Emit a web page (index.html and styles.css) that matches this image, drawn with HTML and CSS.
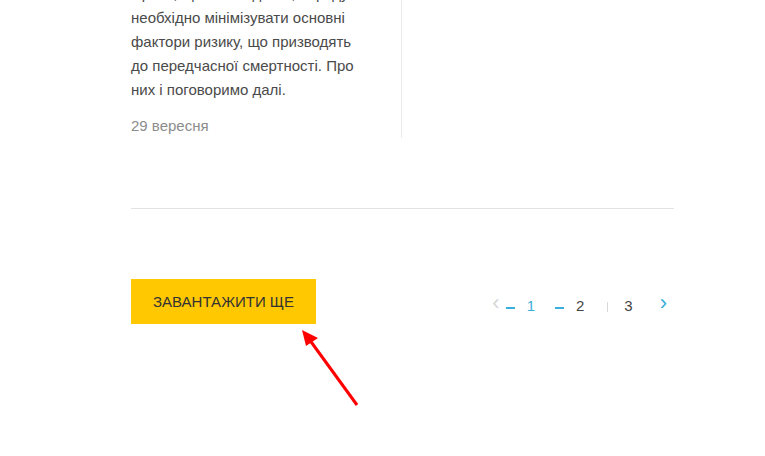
FILE: index.html
```html
<!DOCTYPE html>
<html lang="uk">
<head>
    <meta charset="UTF-8">
    <meta name="viewport" content="width=device-width, initial-scale=1.0">
    <title>Новини</title>
    <link rel="stylesheet" href="styles.css">
</head>
<body>
    <div class="page">
        <div class="news-row">
            <div class="news-item">
                <p class="news-text">Проте, щоб жити довго, передусім<br>необхідно мінімізувати основні фактори ризику, що призводять до передчасної смертності. Про них і поговоримо далі.</p>
                <div class="news-date">29 вересня</div>
            </div>
        </div>

        <hr class="divider">

        <div class="bottom-bar">
            <button class="load-more">ЗАВАНТАЖИТИ ЩЕ</button>
            <div class="pager">
                <span class="pager-arrow disabled">&#8249;</span>
                <span class="pager-dash"></span>
                <span class="pager-num active">1</span>
                <span class="pager-dash"></span>
                <span class="pager-num">2</span>
                <span class="pager-sep"></span>
                <span class="pager-num">3</span>
                <span class="pager-arrow next">&#8250;</span>
            </div>
        </div>
    </div>

    <!-- annotation arrow -->
    <svg class="note-arrow" width="70" height="90" viewBox="0 0 70 90">
        <line x1="60" y1="79" x2="12" y2="13" stroke="#ff0000" stroke-width="3"/>
        <polygon points="5,4 21,12 9,20" fill="#ff0000"/>
    </svg>
</body>
</html>
```

FILE: styles.css
```css
body {
    margin: 0;
    background-color: #ffffff;
    font-family: "Liberation Sans", Arial, sans-serif;
    color: #444;
    overflow: hidden;
}
.page {
    width: 543px;
    margin-left: 131px;
}
.news-row {
    display: flex;
}
.news-item {
    width: 240px;
    padding-right: 30px;
    border-right: 1px solid #ececec;
    margin-top: -18px;
    padding-bottom: 2px;
}
.news-text {
    margin: 0;
    font-size: 15px;
    line-height: 24px;
    color: #4a4a4a;
}
.news-date {
    margin-top: 14px;
    font-size: 15px;
    line-height: 20px;
    color: #8c8c8c;
}
.divider {
    border: none;
    border-top: 1px solid #e2e2e2;
    margin: 70px 0 0 0;
}
.bottom-bar {
    display: flex;
    justify-content: space-between;
    align-items: center;
    margin-top: 70px;
}
.load-more {
    background-color: #ffc800;
    color: #333;
    border: none;
    width: 185px;
    height: 45px;
    padding: 0;
    font-family: "Liberation Sans", Arial, sans-serif;
    font-size: 15px;
    cursor: pointer;
}
.pager {
    display: flex;
    align-items: center;
    height: 20px;
    margin-top: 8px;
    margin-right: 7px;
    font-size: 15px;
}
.pager-arrow {
    font-size: 22px;
    line-height: 20px;
    margin-top: -6px;
}
.pager-arrow.disabled {
    color: #d6d6d6;
}
.pager-arrow.next {
    color: #3aaedc;
    margin-left: 27px;
}
.pager-dash {
    width: 9px;
    height: 2px;
    background-color: #3aaedc;
    margin: 4px 0 0 6px;
}
.pager-num {
    color: #444;
    margin-left: 12px;
}
.pager-num.active {
    color: #3aaedc;
}
.pager-sep {
    width: 1px;
    height: 10px;
    background-color: #d8d8d8;
    margin: 3px 0 0 23px;
}
.pager-num + .pager-dash {
    margin-left: 20px;
}
.pager-sep + .pager-num {
    margin-left: 16px;
}
.note-arrow {
    position: absolute;
    left: 297px;
    top: 326px;
}
```
